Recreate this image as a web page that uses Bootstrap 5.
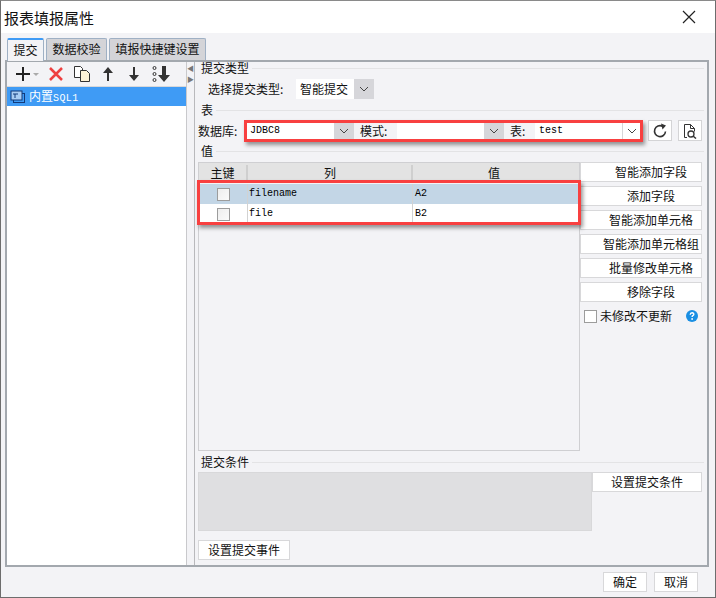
<!DOCTYPE html>
<html lang="zh"><head><meta charset="utf-8"><title>报表填报属性</title>
<link rel="stylesheet" href="https://cdn.jsdelivr.net/npm/bootstrap@5.3.0/dist/css/bootstrap.min.css">
<style>
html,body{margin:0;height:598px;overflow:hidden;background:#f3f3f6}
body{font:12px/1 "Noto Sans CJK SC","Liberation Sans",sans-serif;color:#111}
.dlg{width:716px;height:598px;border:1px solid #6d6d6d;border-top-color:#8a8a8a;display:flex;flex-direction:column;position:relative}
.ttl{height:32px;background:#fff;flex:none;padding:0 3px;font-size:15px}
.tabbar{height:27px;flex:none;padding:5px 0 0 6px;gap:2px}
.tb{height:22px;background:#d4d4d8;border:1px solid #9fb0c4;border-bottom:0;border-radius:2px 2px 0 0;padding:0 5.5px 1px;font-size:12px}
.tb.on{background:#f3f3f6;border-top:2px solid #3f9bf5;height:23px;margin-bottom:-1px;position:relative;z-index:1;border-color:#3f9bf5 #9fb0c4 #f3f3f6}
.mainp{height:507px;margin-left:4px;width:704px;flex:none;border:2px solid #a3a8ae;display:flex}
.leftp{width:180px;flex:none;background:#fff;border-right:1px solid #c9c9cc}
.tools{height:24px;background:#f3f3f6;padding-left:8px;border-bottom:1px solid #d8d8da;box-sizing:content-box}
.tools svg{display:block;flex:none}
.sel{height:19px;background:#3f9bf5;color:#fff;padding-left:3px;gap:4px}
.split{width:7px;flex:none;gap:4px;color:#777;font-size:7px;padding-top:3px}
.rightp{flex:1;border-left:1px solid #b9b9bc;padding:0 3px;min-width:0}
.sect{height:14px;margin-left:-1px;padding-left:4px;gap:3px}
.sect::after{content:"";flex:1;border-top:1px solid #e3e3e5}
.combo{background:#fff;height:20px}
.arr{width:20px;height:100%;background:#d6d6da;flex:none}
.arr.lite{background:#fff;border-left:1px solid #d6d6d8;width:18px}
.mono{font:10px "Liberation Mono",monospace;color:#000}
.icobtn{width:24px;height:21px;background:#fff;border:1px solid #d4d4d6;flex:none}
.tbl{width:382px;height:289px;border:1px solid #cfcfd2;flex:none}
.thd{height:20px;background:#e3e3e3;border-bottom:1px solid #dcdcdc}
.rw{height:20px;background:#fff}
.rw.hi{background:#c3d6e6}
.c1{width:49px;flex:none;text-align:center;border-right:1px solid #d2d2d2;height:100%}
.c2{width:165px;flex:none;border-right:1px solid #d2d2d2;height:100%;padding:0 0 2px 1px}
.c3{flex:1;padding:0 0 2px 2px;height:100%}
.thd .c1,.thd .c2{border-right:2px solid #cfcfcf;height:16px;padding-bottom:0}
.thd .c3{padding:0 4px 0 0}
.ck{width:13px;height:13px;border:1px solid #9c9c9c;background:linear-gradient(135deg,#eee,#fbfbfb)}
.gbtn{background:#fff;border:1px solid #d8d8da;height:20px;flex:none;text-align:center}
.sidebtns{width:122px;flex:none;gap:4px}
.sidebtns .gbtn{padding-left:20px}
.redb{position:absolute;border:3px solid #f84040;box-shadow:2px 3px 4px rgba(0,0,0,.4);pointer-events:none}
.foot{height:30px;flex:none;padding:5px 17px 0 0;gap:7px}
.foot .gbtn{width:44px}
</style></head><body>
<div class="dlg">
 <div class="ttl d-flex align-items-center justify-content-between"><span>报表填报属性</span>
  <svg width="14" height="14" class="me-3" viewBox="0 0 14 14"><path d="M1 1L13 13M13 1L1 13" stroke="#222" stroke-width="1.2"/></svg></div>
 <div class="tabbar d-flex align-items-end"><div class="tb on d-flex align-items-center">提交</div><div class="tb d-flex align-items-center">数据校验</div><div class="tb d-flex align-items-center">填报快捷键设置</div></div>
 <div class="mainp">
  <div class="leftp">
   <div class="tools d-flex align-items-center">
    <svg width="30" height="20" viewBox="0 0 30 20"><path d="M1 10H15M8 3V17" stroke="#222" stroke-width="2"/><path d="M18 9h6l-3 3z" fill="#aaa"/></svg>
    <svg style="margin-left:2px" width="18" height="18" viewBox="0 0 18 18"><path d="M3 3L15 15M15 3L3 15" stroke="#ee4040" stroke-width="2.500"/></svg>
    <svg style="margin-left:8px" width="18" height="18" viewBox="0 0 18 18"><path d="M1.500 1.500h6l2 2v9h-8z" fill="#fff" stroke="#333"/><path d="M7.500 5.500h6l3 3v8h-9z" fill="#fdf3d8" stroke="#333"/></svg>
    <svg style="margin-left:9px" width="16" height="18" viewBox="0 0 16 18"><path d="M8 2l-5 6h4v8h2V8h4z" fill="#333"/></svg>
    <svg style="margin-left:10px" width="16" height="18" viewBox="0 0 16 18"><path d="M8 16l-5-6h4V2h2v8h4z" fill="#333"/></svg>
    <svg style="margin-left:10px" width="18" height="18" viewBox="0 0 18 18"><path d="M12 17l-6-7h4V1h4v9h4z" fill="#333"/><circle cx="2.500" cy="3" r="1.500" fill="none" stroke="#333"/><circle cx="2.500" cy="9" r="1.500" fill="none" stroke="#333"/><circle cx="2.500" cy="15" r="1.500" fill="none" stroke="#333"/></svg>
   </div>
   <div class="sel d-flex align-items-center">
    <svg width="15" height="13" viewBox="0 0 15 13"><rect x="3.500" y="3.500" width="11" height="9" fill="#3f9bf5" stroke="#123a7a"/><rect x="1" y="1" width="11" height="9" fill="#a9cdf3" stroke="#123a7a"/><path d="M3 4h5M5 4v4" stroke="#123a7a"/></svg>
    <span>内置<span class="mono text-white" style="letter-spacing:.4px">SQL1</span></span></div>
  </div>
  <div class="split d-flex flex-column align-items-center"><span>◀</span><span>▶</span></div>
  <div class="rightp">
   <div class="sect d-flex align-items-center" style="margin-top:-1px">提交类型</div>
   <div class="d-flex align-items-center" style="height:20px;margin-top:4px;padding-left:10px"><span style="width:88px">选择提交类型:</span><div class="combo d-flex align-items-center" style="width:78px"><span class="flex-grow-1 ps-1 text-nowrap">智能提交</span><div class="arr d-flex align-items-center justify-content-center"><svg width="10" height="6" viewBox="0 0 10 6"><path d="M1 1l4 4 4-4" fill="none" stroke="#444"/></svg></div></div></div>
   <div class="sect d-flex align-items-center" style="margin-top:4px">表</div>
   <div class="d-flex align-items-center" style="height:21px;margin-top:3px">
    <span style="width:48px;flex:none">数据库:</span>
    <div class="combo d-flex align-items-center mono" style="width:108px"><span class="flex-grow-1 ps-1">JDBC8</span><div class="arr d-flex align-items-center justify-content-center"><svg width="10" height="6" viewBox="0 0 10 6"><path d="M1 1l4 4 4-4" fill="none" stroke="#444"/></svg></div></div>
    <span style="width:43px;padding-left:6px;flex:none">模式:</span>
    <div class="combo d-flex align-items-center" style="width:107px"><span class="flex-grow-1"></span><div class="arr d-flex align-items-center justify-content-center"><svg width="10" height="6" viewBox="0 0 10 6"><path d="M1 1l4 4 4-4" fill="none" stroke="#444"/></svg></div></div>
    <span style="width:31px;padding-left:6px;flex:none">表:</span>
    <div class="combo d-flex align-items-center mono" style="width:105px"><span class="flex-grow-1 ps-1">test</span><div class="arr lite d-flex align-items-center justify-content-center"><svg width="10" height="6" viewBox="0 0 10 6"><path d="M1 1l4 4 4-4" fill="none" stroke="#444"/></svg></div></div>
    <div class="icobtn d-flex align-items-center justify-content-center" style="margin-left:8px"><svg width="16" height="16" viewBox="0 0 16 16"><path d="M13.500 8.500A5.500 5.500 0 1 1 10.500 3.200" fill="none" stroke="#333" stroke-width="1.600"/><path d="M9 0.500l5 2-3.500 4z" fill="#333"/></svg></div>
    <div class="icobtn d-flex align-items-center justify-content-center" style="margin-left:6px"><svg width="16" height="16" viewBox="0 0 16 16"><path d="M2.500 14.500v-13h6l4 4v3M5 14.500H2.500" fill="none" stroke="#333"/><path d="M8.500 1.500v4h4" fill="none" stroke="#333"/><circle cx="9" cy="11" r="3" fill="none" stroke="#333" stroke-width="1.300"/><path d="M11 13l3 2.500" stroke="#333" stroke-width="1.500"/></svg></div>
   </div>
   <div class="sect d-flex align-items-center" style="margin-top:3px">值</div>
   <div class="d-flex" style="margin-top:4px">
    <div class="tbl">
     <div class="thd d-flex align-items-center"><div class="c1 d-flex align-items-center justify-content-center">主键</div><div class="c2 d-flex align-items-center justify-content-center">列</div><div class="c3 d-flex align-items-center justify-content-center">值</div></div>
     <div class="rw hi d-flex align-items-center mono" style="margin-top:1px"><div class="c1 d-flex align-items-center justify-content-center"><div class="ck"></div></div><div class="c2 d-flex align-items-center">filename</div><div class="c3 d-flex align-items-center">A2</div></div>
     <div class="rw d-flex align-items-center mono"><div class="c1 d-flex align-items-center justify-content-center"><div class="ck"></div></div><div class="c2 d-flex align-items-center">file</div><div class="c3 d-flex align-items-center">B2</div></div>
    </div>
    <div class="sidebtns d-flex flex-column">
     <div class="gbtn d-flex align-items-center justify-content-center">智能添加字段</div>
     <div class="gbtn d-flex align-items-center justify-content-center">添加字段</div>
     <div class="gbtn d-flex align-items-center justify-content-center">智能添加单元格</div>
     <div class="gbtn d-flex align-items-center justify-content-center">智能添加单元格组</div>
     <div class="gbtn d-flex align-items-center justify-content-center">批量修改单元格</div>
     <div class="gbtn d-flex align-items-center justify-content-center">移除字段</div>
     <div class="d-flex align-items-center" style="height:20px;padding-left:4px;gap:3px"><div class="ck" style="background:#fff"></div><span class="flex-grow-1">未修改不更新</span><svg class="me-1" width="12" height="12" viewBox="0 0 12 12"><circle cx="6" cy="6" r="6" fill="#1a8fe3"/><path d="M4.200 4.700Q4.300 2.800 6.100 2.800Q7.900 2.900 7.800 4.300Q7.700 5.200 6.800 5.700Q6.100 6.100 6.100 7" fill="none" stroke="#fff" stroke-width="1.400"/><circle cx="6.100" cy="9" r=".9" fill="#fff"/></svg></div>
    </div>
   </div>
   <div class="sect d-flex align-items-center" style="margin-top:4px">提交条件</div>
   <div class="d-flex" style="margin-top:3px">
    <div style="width:394px;height:59px;background:#dfdfe1;border:1px solid #d8d8da"></div>
    <div class="gbtn d-flex align-items-center justify-content-center" style="width:110px">设置提交条件</div>
   </div>
   <div class="gbtn d-flex align-items-center justify-content-center" style="width:92px;margin-top:9px">设置提交事件</div>
  </div>
 </div>
 <div class="foot d-flex justify-content-end"><div class="gbtn d-flex align-items-center justify-content-center">确定</div><div class="gbtn d-flex align-items-center justify-content-center">取消</div></div>
 <div class="redb" style="left:243px;top:119px;width:399px;height:22px"></div>
 <div class="redb" style="left:196px;top:179px;width:384px;height:45px"></div>
</div>
<script src="https://cdn.jsdelivr.net/npm/bootstrap@5.3.0/dist/js/bootstrap.bundle.min.js"></script>
</body></html>
